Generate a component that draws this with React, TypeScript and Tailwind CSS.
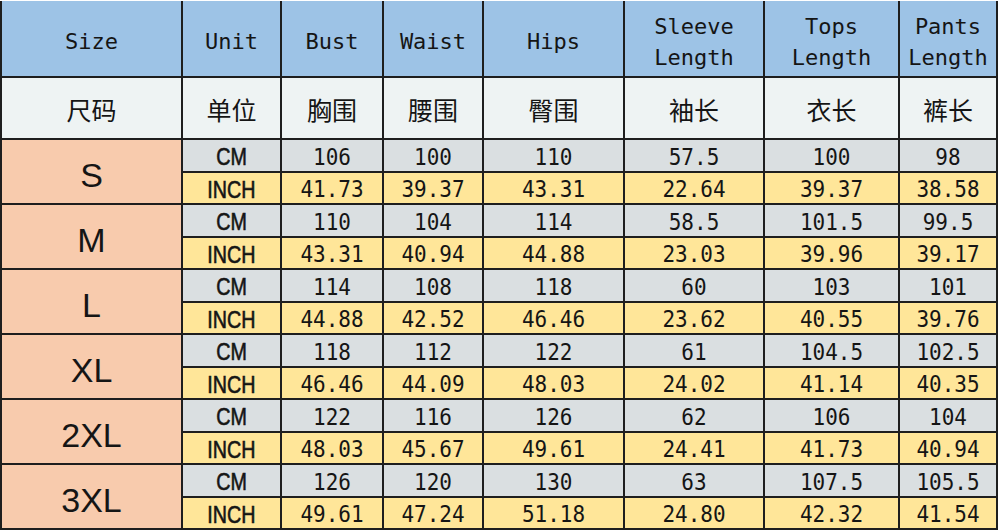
const headers = [
  ["Size"],
  ["Unit"],
  ["Bust"],
  ["Waist"],
  ["Hips"],
  ["Sleeve", "Length"],
  ["Tops", "Length"],
  ["Pants", "Length"],
]

const zh = ["尺码", "单位", "胸围", "腰围", "臀围", "袖长", "衣长", "裤长"]

const sizes = [
  { size: "S", cm: ["106", "100", "110", "57.5", "100", "98"], inch: ["41.73", "39.37", "43.31", "22.64", "39.37", "38.58"] },
  { size: "M", cm: ["110", "104", "114", "58.5", "101.5", "99.5"], inch: ["43.31", "40.94", "44.88", "23.03", "39.96", "39.17"] },
  { size: "L", cm: ["114", "108", "118", "60", "103", "101"], inch: ["44.88", "42.52", "46.46", "23.62", "40.55", "39.76"] },
  { size: "XL", cm: ["118", "112", "122", "61", "104.5", "102.5"], inch: ["46.46", "44.09", "48.03", "24.02", "41.14", "40.35"] },
  { size: "2XL", cm: ["122", "116", "126", "62", "106", "104"], inch: ["48.03", "45.67", "49.61", "24.41", "41.73", "40.94"] },
  { size: "3XL", cm: ["126", "120", "130", "63", "107.5", "105.5"], inch: ["49.61", "47.24", "51.18", "24.80", "42.32", "41.54"] },
]

const mono = "font-['DejaVu_Sans_Mono',monospace]"
const cell = "flex items-center justify-center"

function Unit({ label, bg }: { label: string; bg: string }) {
  return (
    <div className={`${bg} ${cell} pt-[3px]`}>
      <span className="inline-block text-[24px] leading-none font-['Liberation_Sans',sans-serif] scale-x-[0.82] [-webkit-text-stroke:0.6px_#151515]">
        {label}
      </span>
    </div>
  )
}

function Num({ v, bg }: { v: string; bg: string }) {
  return (
    <div className={`${bg} ${cell} pt-[3px]`}>
      <span className={`inline-block text-[21px] leading-none scale-y-[1.12] ${mono}`}>{v}</span>
    </div>
  )
}

export default function App() {
  return (
    <div className="w-[1000px] h-[531px] bg-white pt-[1px] overflow-hidden text-[#151515]">
      <div className="w-[998px] grid grid-cols-[179px_97px_100px_98px_139px_138px_133px_96px] grid-rows-[75px_60px_repeat(6,31px_30px)] gap-[2px] bg-[#1e1e1e] px-[2px] pb-[2px]">
        {/* english header */}
        {headers.map((h, i) => (
          <div
            key={"h" + i}
            className={`bg-[#9dc3e6] ${cell} flex-col pt-[6px] text-[22px] leading-[31px] ${mono}`}
          >
            {h.map((line) => (
              <span key={line}>{line}</span>
            ))}
          </div>
        ))}

        {/* chinese header */}
        {zh.map((t, i) => (
          <div
            key={"z" + i}
            className={`bg-[#eef3f3] ${cell} pt-[4px] text-[25px] font-['Noto_Sans_CJK_SC',sans-serif]`}
          >
            {t}
          </div>
        ))}

        {sizes.map((s) => [
          <div
            key={s.size}
            className={`row-span-2 bg-[#f8cbad] ${cell} pt-[8px] text-[34px] font-['Liberation_Sans',sans-serif]`}
          >
            {s.size}
          </div>,
          <Unit key={s.size + "cm"} label="CM" bg="bg-[#dadfe1]" />,
          ...s.cm.map((v, i) => <Num key={s.size + "c" + i} v={v} bg="bg-[#dadfe1]" />),
          <Unit key={s.size + "in"} label="INCH" bg="bg-[#ffe699]" />,
          ...s.inch.map((v, i) => <Num key={s.size + "i" + i} v={v} bg="bg-[#ffe699]" />),
        ])}
      </div>
    </div>
  )
}
